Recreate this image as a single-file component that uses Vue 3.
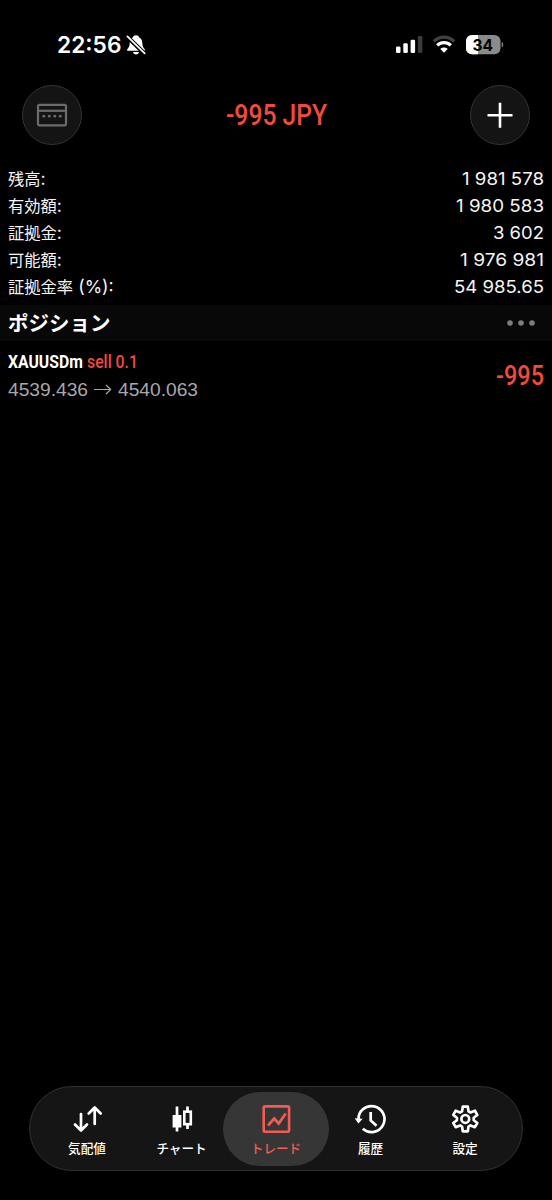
<script setup>
import { h } from 'vue'

// Text set to an exact advance width, for the condensed faces
const FitText = (props) =>
  h('svg', { width: props.w, height: props.h, style: { overflow: 'visible', display: 'block' } }, [
    h('text', { x: 0, y: props.b, textLength: props.w, lengthAdjust: 'spacingAndGlyphs', fill: 'currentColor' }, props.text)
  ])
FitText.props = ['text', 'w', 'h', 'b']

const rows = [
  { label: '残高', suffix: ':', value: '1 981 578', w: 82 },
  { label: '有効額', suffix: ':', value: '1 980 583', w: 88 },
  { label: '証拠金', suffix: ':', value: '3 602', w: 51 },
  { label: '可能額', suffix: ':', value: '1 976 981', w: 84 },
  { label: '証拠金率', suffix: ' (%):', value: '54 985.65', w: 90 }
]
const tabs = [
  { id: 'quotes', label: '気配値' },
  { id: 'chart', label: 'チャート' },
  { id: 'trade', label: 'トレード' },
  { id: 'history', label: '履歴' },
  { id: 'settings', label: '設定' }
]
</script>

<template>
  <main class="screen">
    <header class="status">
      <FitText class="time" text="22:56" :w="64.5" :h="24" :b="20" />
      <svg class="bell" width="20" height="22" viewBox="0 0 20 22">
        <path d="M10 1.2C12 1.2 13 2.3 13.3 3.5C15.5 4.6 16.2 6.5 16.3 9C16.4 12 17 13.5 18.8 15.3V16.8H1.2V15.3C3 13.5 3.6 12 3.7 9C3.8 6.5 4.5 4.6 6.7 3.5C7 2.3 8 1.2 10 1.2Z" fill="#fff" />
        <path d="M7 18H13C12.6 21.2 7.4 21.2 7 18Z" fill="#fff" />
        <path d="M0.5 2L19.5 20.5" stroke="#000" stroke-width="4.2" />
        <path d="M1.4 2.3L18.7 19.4" stroke="#fff" stroke-width="1.7" stroke-linecap="round" />
      </svg>
      <div class="indicators">
        <svg width="28" height="20" viewBox="0 0 28 20">
          <rect x="0" y="11.5" width="4.5" height="6.5" rx="1.3" fill="#fff" />
          <rect x="7.3" y="8.3" width="4.5" height="9.7" rx="1.3" fill="#fff" />
          <rect x="14.6" y="4.8" width="4.5" height="13.2" rx="1.3" fill="#fff" />
          <rect x="21.9" y="1" width="4.5" height="17" rx="1.3" fill="#3b3b3b" />
        </svg>
        <svg class="wifi" width="24" height="20" viewBox="0 0 24 20" fill="none">
          <path d="M1.7 6.4C7.4 0.7 16.6 0.7 22.3 6.4" stroke="#414141" stroke-width="3.2" />
          <path d="M5.2 10.3C9.1 6.6 14.9 6.6 18.8 10.3" stroke="#fff" stroke-width="3.2" />
          <path d="M8.3 14C10.2 12 13.8 12 15.7 14L12 17.8Z" fill="#fff" />
        </svg>
        <svg class="battery" width="38" height="20" viewBox="0 0 38 20">
          <defs><clipPath id="cell"><rect x="0" y="0" width="34.5" height="19.3" rx="6" /></clipPath></defs>
          <g clip-path="url(#cell)">
            <rect width="35" height="20" fill="#8b8b8b" />
            <rect width="12" height="20" fill="#fff" />
          </g>
          <path d="M35.7 7C37.7 7.5 37.7 11.8 35.7 12.4Z" fill="#8b8b8b" />
          <text x="6.5" y="15.6" textLength="20.5" lengthAdjust="spacingAndGlyphs">34</text>
        </svg>
      </div>
    </header>

    <nav class="top">
      <button class="round">
        <svg width="32" height="24" viewBox="0 0 32 24" fill="none" stroke="#6b6b6b" stroke-width="2.2">
          <rect x="2" y="1.8" width="28" height="20.5" rx="1.5" />
          <path d="M2 7.8H30" />
          <g fill="#6b6b6b" stroke="none">
            <circle cx="7.8" cy="13.2" r="1.4" /><circle cx="13.3" cy="13.2" r="1.4" />
            <circle cx="18.8" cy="13.2" r="1.4" /><circle cx="24.3" cy="13.2" r="1.4" />
          </g>
        </svg>
      </button>
      <h1 class="total"><FitText text="-995 JPY" :w="101" :h="32" :b="26.3" /></h1>
      <button class="round">
        <svg width="26" height="26" viewBox="0 0 26 26" stroke="#fff" stroke-width="2.6"><path d="M0.5 13.3H25.5M13 0.8V25.8" /></svg>
      </button>
    </nav>

    <section class="account">
      <div v-for="r in rows" :key="r.label" class="row">
        <span>{{ r.label }}<span class="suffix">{{ r.suffix }}</span></span>
        <FitText class="num" :text="r.value" :w="r.w" :h="20" :b="15.8" />
      </div>
    </section>

    <section class="heading">
      <h2>ポジション</h2>
      <svg width="30" height="8" viewBox="0 0 30 8" fill="#7d7d7d"><circle cx="4" cy="4" r="2.8" /><circle cx="15" cy="4" r="2.8" /><circle cx="26" cy="4" r="2.8" /></svg>
    </section>

    <section class="position">
      <div class="details">
        <div class="symbol"><span>XAUUSDm</span><span class="sell">sell 0.1</span></div>
        <div class="prices">
          <FitText text="4539.436" :w="80" :h="20" :b="15" />
          <svg width="18" height="20" viewBox="0 0 18 20" fill="none" stroke="#a8a8a8" stroke-width="1.2"><path d="M0 8.5H16.5M12 4L16.7 8.5L12 13" /></svg>
          <FitText text="4540.063" :w="80" :h="20" :b="15" />
        </div>
      </div>
      <FitText class="profit" text="-995" :w="48" :h="28" :b="23.5" />
    </section>

    <footer class="tabs">
      <a v-for="t in tabs" :key="t.id" class="tab" :class="{ active: t.id === 'trade' }">
        <svg width="32" height="32" viewBox="0 0 32 32" fill="none" stroke="currentColor">
          <g v-if="t.id === 'quotes'" stroke-width="2.7" stroke-linecap="round" stroke-linejoin="round">
            <path d="M10 11V27M4 21.5L10 27.5L16 21.5M23.7 21V4.5M17.7 10.5L23.7 4.5L29.7 10.5" />
          </g>
          <g v-else-if="t.id === 'chart'">
            <path d="M11 3.5V28.5M21.5 3.5V8M21.5 22V26" stroke-width="2.7" />
            <rect x="6.6" y="12" width="8.8" height="12.5" fill="currentColor" stroke="none" />
            <rect x="18.3" y="8.7" width="6.5" height="12.5" stroke-width="2.6" />
          </g>
          <g v-else-if="t.id === 'trade'" stroke-width="2.6">
            <rect x="3.7" y="3.4" width="25.4" height="25.4" rx="1.5" />
            <path d="M8 22.5L14.2 15.5L18.7 20.5L25.7 10.5" stroke-width="2.7" />
          </g>
          <g v-else-if="t.id === 'history'" stroke-width="2.7">
            <path d="M3.5 17A13 13 0 1 1 7.8 25.8" />
            <path d="M-0.5 15.2L7.6 15.8L3.4 20.4Z" fill="currentColor" stroke="none" />
            <path d="M15.7 9V17.5L21.5 22.8" />
          </g>
          <g v-else stroke-width="2.7" stroke-linejoin="round">
            <path d="M13.8 3.6H18.8L19.5 8.3L21.5 9.5L25.9 7.7L28.3 12L24.7 14.8V17.2L28.3 20L25.9 24.2L21.5 22.4L19.5 23.6L18.8 28.3H13.8L13.1 23.6L11.1 22.4L6.7 24.2L4.3 20L7.9 17.2V14.8L4.3 12L6.7 7.7L11.1 9.5L13.1 8.3Z" />
            <circle cx="16.3" cy="15.9" r="3.9" />
          </g>
        </svg>
        <span>{{ t.label }}</span>
      </a>
    </footer>
  </main>
</template>

<style>
html, body { margin: 0; background: #000; }
</style>
<style scoped>
* { box-sizing: border-box; }
.screen {
  width: 552px; height: 1200px; background: #000; color: #fff; overflow: hidden;
  display: flex; flex-direction: column;
  font-family: Inter, "Noto Sans CJK JP", sans-serif;
}
.status { display: flex; align-items: flex-start; height: 85px; padding: 33px 48px 0 57px; }
.time { font-size: 23px; font-weight: 600; }
.bell { margin: 1px 0 0 4px; }
.indicators { display: flex; margin: 2px 0 0 auto; }
.wifi { margin-left: 8px; margin-right: 10px; }
.indicators svg { flex: none; }
.battery text { font: 700 16px Inter, sans-serif; fill: #050505; }
.top { display: flex; justify-content: space-between; align-items: center; height: 60px; padding: 0 22px; }
.round { width: 60px; height: 60px; border-radius: 50%; border: 1px solid #333; background: #141414; padding: 0; display: grid; place-items: center; }
.total { margin: 0; color: #f04b3a; font: 500 29.5px Roboto, sans-serif; }
.account { padding: 20px 8px 0 8px; height: 160px; }
.row { height: 27px; display: flex; justify-content: space-between; align-items: center; font-size: 16.3px; font-family: "Noto Sans CJK JP", sans-serif; line-height: 27px; color: #f4f4f4; }
.suffix { font-family: Inter, sans-serif; font-size: 17.8px; white-space: pre; }
.num { font-family: Inter, sans-serif; font-size: 17.3px; font-weight: 400; }
.heading { height: 36px; background: #080808; display: flex; justify-content: space-between; align-items: center; padding: 0 16px 0 8px; }
h2 { margin: -2px 0 0; font: 700 20.5px/34px "Noto Sans CJK JP", sans-serif; }
.position { display: flex; justify-content: space-between; padding: 12px 8px 0 8px; }
.details { width: 200px; }
.symbol { display: flex; gap: 5px; height: 20px; white-space: nowrap; transform: scaleX(0.83); transform-origin: 0 0; font: 700 19px/18px Roboto, sans-serif; }
.sell { color: #f04b3a; font-weight: 500; }
.prices { display: flex; gap: 6px; margin-top: 8px; color: #a8a8a8; font: 18.5px "Liberation Sans", sans-serif; }
.profit { margin-top: 8px; color: #f04b3a; font: 500 27.5px Roboto, sans-serif; }
.tabs { margin: auto 29px 29px; height: 85px; flex: none; display: flex; align-items: center; justify-content: space-between; border: 1px solid #303030; border-radius: 43px; background: #151515; padding: 0 4px; }
.tab { width: 106px; margin-right: -11.7px; height: 74px; padding-top: 11px; border-radius: 37px; display: flex; flex-direction: column; align-items: center; color: #fff; }
.tab:last-child { margin-right: 0; }
.tab span { font: 500 12.6px/20px "Noto Sans CJK JP", sans-serif; margin-top: 3px; }
.active { background: #363636; color: #f45b52; }
</style>
